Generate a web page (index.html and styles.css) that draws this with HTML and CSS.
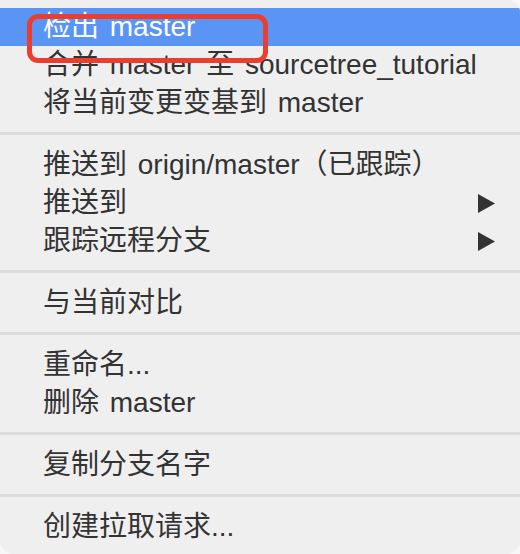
FILE: index.html
```html
<!DOCTYPE html>
<html lang="zh-CN">
<head>
<meta charset="utf-8">
<title>Branch menu</title>
<link rel="stylesheet" href="styles.css">
</head>
<body>
<div class="menu">
  <div class="item active">检出 master</div>
  <div class="item">合并 master 至 sourcetree_tutorial</div>
  <div class="item">将当前变更变基到 master</div>
  <div class="sep"></div>
  <div class="item">推送到 origin/master（已跟踪）</div>
  <div class="item sub"><span>推送到</span><svg class="arrow" width="17" height="19" viewBox="0 0 17 19"><polygon points="0,0 17,9.5 0,19" fill="#333"/></svg></div>
  <div class="item sub"><span>跟踪远程分支</span><svg class="arrow" width="17" height="19" viewBox="0 0 17 19"><polygon points="0,0 17,9.5 0,19" fill="#333"/></svg></div>
  <div class="sep"></div>
  <div class="item">与当前对比</div>
  <div class="sep"></div>
  <div class="item">重命名...</div>
  <div class="item">删除 master</div>
  <div class="sep"></div>
  <div class="item">复制分支名字</div>
  <div class="sep"></div>
  <div class="item">创建拉取请求...</div>
  <div class="annot"></div>
</div>
</body>
</html>
```

FILE: styles.css
```css
html, body {
  margin: 0;
  padding: 0;
  background: #f7f7f7;
}
.menu {
  position: relative;
  width: 520px;
  height: 554px;
  box-sizing: border-box;
  padding-top: 8px;
  background: #efefef;
  border-radius: 0 12px 14px 14px;
  overflow: hidden;
  font-family: "Liberation Sans", "Noto Sans CJK SC", sans-serif;
  font-size: 28px;
  color: #333;
}
.item {
  height: 38px;
  line-height: 38px;
  padding-left: 43px;
  padding-right: 25px;
  display: flex;
  align-items: center;
  white-space: nowrap;
  word-spacing: 3px;
}
.item.sub {
  justify-content: space-between;
}
.item.active {
  background: #5a95f5;
  color: #fff;
}
.sep {
  height: 24px;
  box-sizing: border-box;
  padding-top: 10px;
}
.sep::before {
  content: "";
  display: block;
  height: 3px;
  background: #dcdcdc;
}
.arrow {
  display: block;
  flex: none;
}
.annot {
  position: absolute;
  left: 27px;
  top: 14px;
  width: 241px;
  height: 49px;
  box-sizing: border-box;
  border: 5px solid #ea3f2e;
  border-radius: 11px;
}
```
